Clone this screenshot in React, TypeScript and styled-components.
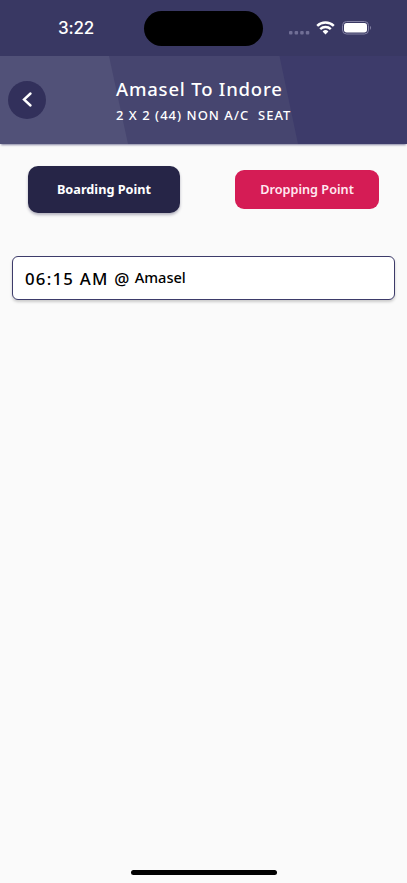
//Modules
import styled, { createGlobalStyle } from "styled-components";

const GlobalStyle = createGlobalStyle`
  *{
    box-sizing:border-box;
  }
  body{
    margin:0;
    background-color:#fafafa;
    font-family:"Noto Sans", "Open Sans", sans-serif;
  }
`;

//Container
const Container = styled.main`
  width:100%;
  height:100vh;
  display:flex;
  flex-direction:column;
  background-color:#fafafa;
  overflow:hidden;
`;

const StatusBar = styled.div`
  height:56px;
  flex:none;
  display:grid;
  grid-template-columns:144px 119px 1fr;
  align-items:center;
  background-color:#393863;
`;

const Clock = styled.time`
  padding-left:58px;
  color:#fff;
  font-family:Inter, sans-serif;
  font-size:17px;
  font-weight:500;
  line-height:20px;
  letter-spacing:-.2px;
`;

const Island = styled.div`
  height:35px;
  border-radius:18px;
  background-color:#000;
`;

const StatusIcons = styled.svg`
  display:block;
  width:86px;
  height:18px;
  margin-left:25px;
`;

const Header = styled.header`
  height:88px;
  flex:none;
  display:flex;
  align-items:center;
  padding-left:8px;
  color:#fff;
  background-color:#3d3b6a;
  position:relative;
  box-shadow:0 2px 2px -1px #3d3b6aa0;
`;

const Stripes = styled.svg`
  position:absolute;
  inset:0;
  width:100%;
  height:100%;
`;

const BackButton = styled.button`
  position:relative;
  width:38px;
  height:38px;
  flex:none;
  display:grid;
  place-items:center;
  padding:0;
  border:0;
  border-radius:50%;
  background-color:#32305b;
`;

const Heading = styled.div`
  position:relative;
  margin-left:70px;
  padding-top:5px;
  white-space:pre;
`;

const Title = styled.h1`
  margin:0;
  font-size:18.5px;
  font-weight:500;
  line-height:26px;
  letter-spacing:.8px;
`;

const Subtitle = styled.p`
  margin:0;
  font-size:13px;
  font-weight:500;
  line-height:27px;
  letter-spacing:1.02px;
`;

const Tabs = styled.nav`
  height:90px;
  flex:none;
  display:flex;
  align-items:center;
  justify-content:space-between;
  padding:1px 28px 0;
`;

const Tab = styled.button<{ $active?: boolean }>`
  width:${({ $active }) => $active ? "152px" : "144px"};
  height:${({ $active }) => $active ? "47px" : "39px"};
  padding:0 0 2px;
  border:0;
  border-radius:${({ $active }) => $active ? "10px" : "9px"};
  color:${({ $active }) => $active ? "#fff" : "#ffe9f1"};
  background-color:${({ $active }) => $active ? "#262547" : "#d51c55"};
  box-shadow:${({ $active }) => $active ? "0 2px 3px #26254755" : "none"};
  font-family:inherit;
  font-size:12.7px;
  font-weight:${({ $active }) => $active ? 700 : 600};
`;

const Points = styled.section`
  flex:1;
  padding:22px 12px 0;
`;

const Point = styled.div`
  height:44px;
  display:flex;
  align-items:center;
  padding-left:12px;
  border:1px solid #3d3b6a;
  border-radius:6px;
  background-color:#fff;
  box-shadow:0 2px 3px #00000030;
  color:#000;
  white-space:pre;
`;

const Time = styled.span`
  font-size:16.8px;
  font-weight:500;
  letter-spacing:1.25px;
`;

const Place = styled.span`
  margin-left:4px;
  padding-bottom:2px;
  font-size:14.6px;
  font-weight:500;
`;

const HomeIndicator = styled.div`
  width:146px;
  height:5px;
  flex:none;
  margin:0 auto 8px;
  border-radius:3px;
  background-color:#000;
`;

const App = () => {
  return(
    <>
    <GlobalStyle />
    <Container>
      <StatusBar>
        <Clock>3:22</Clock>
        <Island />
        <StatusIcons viewBox="0 0 86 18">
          <g fill="#716f96">
            <rect x="1" y="12" width="3.5" height="3.5" rx="1"/>
            <rect x="6.6" y="12" width="3.5" height="3.5" rx="1"/>
            <rect x="12.2" y="12" width="3.5" height="3.5" rx="1"/>
            <rect x="17.8" y="12" width="3.5" height="3.5" rx="1"/>
          </g>
          <g fill="none" stroke="#fff" strokeWidth="2.5">
            <path d="M29.2 6.9a12 12 0 0 1 16.6 0"/>
            <path d="M32.2 10.2a7.7 7.7 0 0 1 10.6 0"/>
          </g>
          <path d="M34.6 12.5a4.2 4.2 0 0 1 5.8 0L37.5 15.5z" fill="#fff"/>
          <rect x="54.5" y="2.5" width="26" height="12.5" rx="4" fill="none" stroke="#8381a3"/>
          <rect x="56" y="4" width="23" height="9.5" rx="2.7" fill="#fff"/>
          <path d="M82 6.7q2.2 2 0 4.2z" fill="#8381a3"/>
        </StatusIcons>
      </StatusBar>
      <Header>
        <Stripes viewBox="0 0 407 88" preserveAspectRatio="none">
          <path d="M0 0H279.5L298 88H0z" fill="#46456f"/>
          <path d="M0 0H109L128 88H0z" fill="#515178"/>
        </Stripes>
        <BackButton aria-label="Back">
          <svg width="38" height="38" viewBox="0 0 38 38" fill="none" stroke="#fff" strokeWidth="2.4" strokeLinecap="round">
            <path d="M22.5 12.5L16 18.5L22.5 24.5"/>
          </svg>
        </BackButton>
        <Heading>
          <Title>Amasel To Indore</Title>
          <Subtitle>2 X 2 (44) NON A/C  SEAT</Subtitle>
        </Heading>
      </Header>
      <Tabs>
        <Tab $active>Boarding Point</Tab>
        <Tab>Dropping Point</Tab>
      </Tabs>
      <Points>
        <Point>
          <Time>06:15 AM @</Time>
          <Place>Amasel</Place>
        </Point>
      </Points>
      <HomeIndicator />
    </Container>
    </>
  )
};

export default App;
